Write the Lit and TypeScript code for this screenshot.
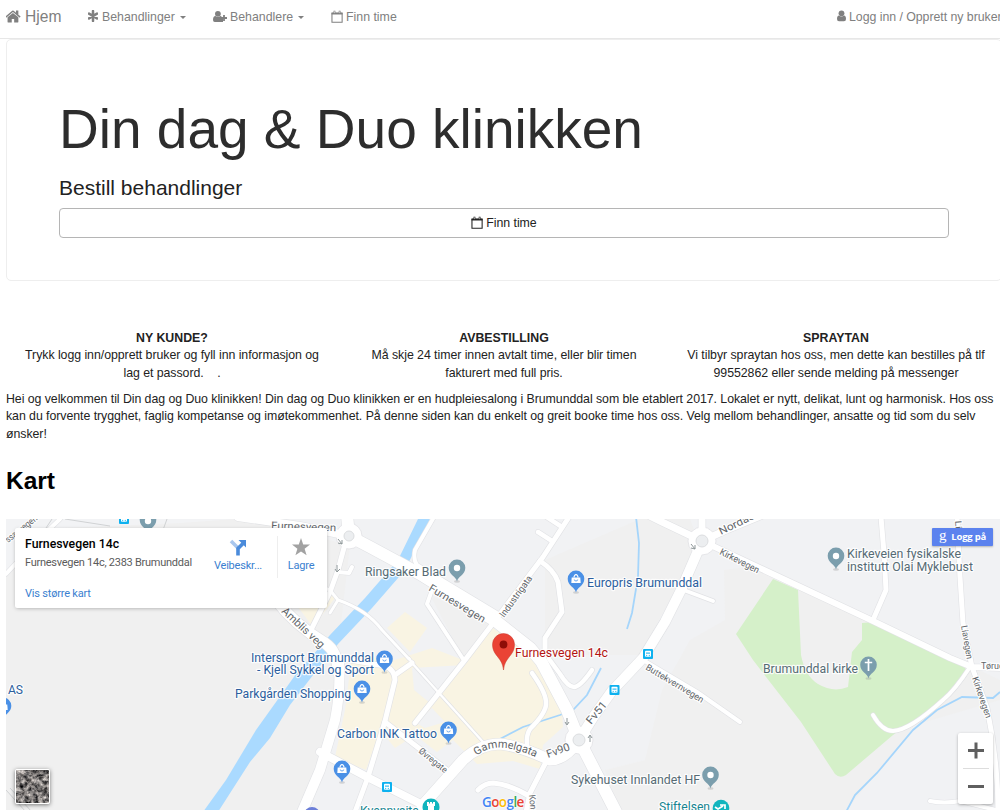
import { LitElement, html, svg, css } from "lit";
import { customElement } from "lit/decorators.js";

const calendar = svg`<path d="M1 3.2h10.6v9.3H1z" fill="none" stroke="currentColor" stroke-width="1.1"/><path d="M.6 2.4h11.4v2H.6z" fill="currentColor"/><path d="M3.6 .5v2.8M9 .5v2.8" stroke="currentColor" stroke-width="1.9"/><path d="M3.6 1v2M9 1v2" stroke="#fff" stroke-width=".6"/>`;
const home = svg`<path fill="currentColor" d="M1408 992v480q0 26-19 45t-45 19h-384v-384h-256v384h-384q-26 0-45-19t-19-45v-480q0-1 .5-3t.5-3l575-474 575 474q1 2 1 6zm223-69l-62 74q-8 9-21 11h-3q-13 0-21-7l-692-577-692 577q-12 8-24 7-13-2-21-11l-62-74q-8-10-7-23.5t11-21.5l719-599q32-26 76-26t76 26l244 204v-195q0-14 9-23t23-9h192q14 0 23 9t9 23v408l219 182q10 8 11 21.5t-7 23.5z"/>`;

type Line = [string, number];

// Streets: centre line and width
const streets: Line[] = [
  ["M347 515L349 536L370 547L420 574L497 622L530 648L541 661L567 710L579 740L616 812", 12],
  ["M579 740L594 716L612 691L643 658L665 622L681 590L697 553L702 541", 10],
  ["M579 740Q565 760 550 760Q520 746 500 744Q480 744 463 760L422 806", 11],
  ["M702 541L873 621L950 658L972 667L1002 668", 6],
  ["M702 541L660 521L650 516M702 541L702 517M702 541L724 531L770 512", 7],
  ["M957 517L960 577L963 623L972 667L987 708Q998 760 998 812", 5],
  ["M881 517L884 553L886 590L873 620", 5],
  ["M681 589L713 601", 4],
  ["M873 715Q882 731 893 731Q910 730 943 700Q955 690 970 667", 4],
  ["M643 660L697 692L740 722", 4],
  ["M569 517L543 557L497 618L465 660L415 723", 5],
  ["M540 561Q554 570 558 582L562 612L545 638L545 652", 5],
  ["M545 516L562 527M538 532L552 541", 4.5],
  ["M434 517L415 550Q413 560 417 565L500 615", 4],
  ["M432 590L427 604L463 659", 4],
  ["M409 658L412 663L483 742", 2.5],
  ["M345 544L338 570L330 592L310 632", 5],
  ["M337 572L349 573L352 567", 4],
  ["M322 587L330 590L338 600L330 613M338 600Q367 610 382 630L409 659", 3],
  ["M238 517L300 526L349 536", 8],
  ["M276 600Q295 625 325 643Q338 652 338 672", 11],
  ["M339 660Q341 690 335 720L320 770L302 812", 10],
  ["M320 752L367 777L425 806", 8],
  ["M355 812L368 777L385 721L395 680Q395 670 385 666L338 658M395 675L412 663", 5],
  ["M385 722L451 773", 5],
  ["M532 673Q547 694 546 704Q546 713 530 729Q526 735 527 745", 4.5],
  ["M549 659L560 674Q568 687 574 687Q580 687 592 670", 4.5],
  ["M547 760L530 793L526 812M478 790Q485 783 493 783Q509 784 529 796", 5],
  ["M930 801Q944 804 960 801L1000 811", 4],
  ["M6 574L35 543L60 519", 4],
];
const water = [
  "M636 517L639 543L638 577L632 613L627 629",
  "M601 668L587 695L573 710L560 715L523 727L498 740",
  "M1000 692L993 698L962 697L937 710L913 730L877 773L855 795L846 812",
];
// Labels: text, x, y, drawn length, size, colour, rotation
type Label = [string, number, number, number, number, string, number];
const G = "#566b74", B = "#2c5f9e", R = "#62666a", T = "#168591", D = "#b31412";
const labels: Label[] = [
  ["Ringsaker Blad", 365, 576, 81, 12, G, 0],
  ["Europris Brumunddal", 587, 587, 115, 12, B, 0],
  ["Kirkeveien fysikalske", 847, 558, 114, 12, G, 0],
  ["institutt Olai Myklebust", 847, 570.5, 126, 12, G, 0],
  ["Furnesvegen 14c", 515, 657, 93, 12.5, D, 0],
  ["Intersport Brumunddal", 251, 661.5, 123, 12, B, 0],
  ["- Kjell Sykkel og Sport", 257, 674, 117, 12, B, 0],
  ["Parkgården Shopping", 235, 697.5, 116, 12, B, 0],
  ["Carbon INK Tattoo", 337, 738, 100, 12, B, 0],
  ["AS", 8, 694, 15, 12, B, 0],
  ["Brumunddal kirke", 763, 673, 95, 12, G, 0],
  ["Sykehuset Innlandet HF", 571, 784, 129, 12, G, 0],
  ["Stiftelsen", 659, 811, 51, 12, T, 0],
  ["Kvennvsita", 360, 815, 59, 12, T, 0],
  ["Furnesvegen", 271, 529, 65, 10.5, R, 2],
  ["Furnesvegen", 428, 590, 64, 10.5, R, 31],
  ["Industrigata", 504, 618, 49, 9.5, R, -54],
  ["Kirkevegen", 719, 554, 43, 9.5, R, 27],
  ["Nordas", 721, 535, 38, 10.5, R, -26],
  ["Amblis veg", 281, 612, 54, 11, R, 43],
  ["Øvregate", 418, 752, 34, 9, R, 39],
  ["Fv51", 591, 725, 26, 11, R, -50],
  ["Fv90", 548, 758, 24, 11, R, -20],
  ["Buttekvernvegen", 645, 669, 66, 9, R, 31],
  ["Liavegen", 961, 626, 34, 9, R, 80],
  ["Kirkevegen", 972, 678, 43, 9, R, 71],
  ["Tørud", 981, 669, 23, 9, R, 0],
  ["ssasvegen", 8, 543, 38, 9, R, -38],
  ["Konge", 529, 795, 24, 9, R, 84],
  ["Li", 955, 521, 8, 9, R, 85],
];
const shops: [number, number][] = [[576, 580], [384.5, 660], [362, 690], [448.5, 731], [342, 770], [3, 707]];
const places: [number, number][] = [[457, 569], [836, 557], [710.5, 776]];
const stops: [number, number][] = [[648, 654], [614.5, 690], [387, 787], [124, 519]];

const pin = (x: number, y: number, fill: string, inner: unknown) => svg`
  <g transform="translate(${x} ${y})">
    <ellipse cx="0" cy="12.5" rx="3" ry="1.2" fill="#999" opacity=".35"/>
    <path d="M0 12.5C-.7 7.5-8.3 6-8.3-1.2a8.3 8.3 0 0 1 16.6 0C8.3 6 .7 7.5 0 12.5z" fill="${fill}"/>
    ${inner}
  </g>`;
const bag = svg`<path d="M-4.300-2.500h8.600l.4 5.500h-9.400z" fill="#fff"/><path d="M-2-2.500a2 2.800 0 0 1 4 0" fill="none" stroke="#fff" stroke-width="1.200"/><path d="M-1.700-.5a1.700 1.500 0 0 0 3.400 0" fill="none" stroke="#4a90e6" stroke-width=".8"/>`;

@customElement("clinic-map")
class ClinicMap extends LitElement {
  static styles = css`
    :host { display: block; position: relative; height: 291px; overflow: hidden; font-family: Roboto, sans-serif; }
    .canvas { display: block; width: 994px; height: 291px; }
    .label { paint-order: stroke; stroke: #fff; stroke-width: 2.4px; stroke-linejoin: round; stroke-opacity: .85; }
    .card { position: absolute; left: 9px; top: 9px; width: 312px; height: 80px; box-sizing: border-box; padding: 8px 10px; background: #fff; border-radius: 2px; box-shadow: 0 1px 4px -1px rgba(0,0,0,.35); display: flex; }
    .info { flex: none; width: 185px; white-space: nowrap; font-size: 11px; color: #5b5b5b; }
    .name { font-size: 12.3px; line-height: 17px; font-weight: 500; color: #000; }
    .addr { line-height: 18px; margin-top: 1px; letter-spacing: -.26px; }
    .info a { display: block; margin-top: 14px; line-height: 16px; color: #3a7fd0; font-size: 11px; letter-spacing: -.2px; }
    .act { text-align: center; color: #3a7fd0; font-size: 11px; line-height: 14px; letter-spacing: -.2px; }
    .act svg { display: block; margin: 1px auto 2px; }
    .directions { flex: none; width: 58px; margin-left: -1px; }
    .save { flex: none; width: 46px; margin-left: 10px; border-left: 1px solid #eee; height: 42px; }
    .login { position: absolute; left: 926px; top: 9px; width: 61px; height: 18px; box-sizing: border-box; background: #5b82ee; border-radius: 1px; box-shadow: 0 1px 2px rgba(0,0,0,.25); color: #fff; font: bold 9.5px/17px "Open Sans", sans-serif; letter-spacing: -.2px; display: flex; gap: 5px; padding-left: 7px; white-space: nowrap; }
    .login span { font: 15px/14px "Liberation Serif", serif; }
    .zoom { position: absolute; left: 952px; top: 214px; width: 35px; height: 71px; background: #fff; border-radius: 2px; box-shadow: 0 1px 3px rgba(0,0,0,.3); }
    .zoom svg { display: block; }
    .sat { position: absolute; left: 9px; top: 250px; width: 33px; height: 33px; border: 1.5px solid #fff; border-radius: 2px; box-shadow: 0 1px 4px rgba(0,0,0,.5); overflow: hidden; }
    .sat svg { display: block; }
    .google { position: absolute; left: 476px; top: 274px; font: 600 13.5px/18px "Open Sans", sans-serif; letter-spacing: -.6px; text-shadow: 0 0 2px #fff, 0 0 2px #fff; }
    .gb { color: #4285f4; } .gr { color: #ea4335; } .gy { color: #fbbc05; } .gg { color: #34a853; }
  `;
  render() {
    return html`
      <svg class="canvas" viewBox="6 519 994 291">
        <rect x="6" y="519" width="994" height="291" fill="#f1f2f4"/>
        <path fill="#f0f0f0" d="M6 519H240L350 545L338 650L338 700L300 812H6zM545 560L640 519H690L700 545L640 655L545 655zM724 570L760 565L1000 680V700L915 725L845 812H620L605 770L645 760L662 690L690 640L725 620zM430 595L497 627L463 658z"/>
        <path fill="#f2f3f5" d="M6 519H236L180 523L60 528L6 570z"/>
        <path fill="#f9f4e3" d="M298 607L327 592L335 598L313 627zM405 612L427 628L410 652L387 628zM352 655L395 660L432 648L463 660L493 628L530 655L562 712L563 727L543 745L540 769L513 761L477 764L453 740L437 752L415 735L395 748L380 730L366 770L335 757L345 710z"/>
        <path fill="#f1f2f4" d="M412 668L465 665L430 703L414 690zM416 723L432 708L445 722L425 728z"/>
        <path fill="#d5f0c9" d="M773 579L798 590L801 655Q805 676 818 684Q833 693 848 687L852 652L862 640V623L873 622L953 658L967 670L943 700L893 735L846 775Q840 779 835 774L801 722L753 660L736 634z"/>
        <path fill="#aadaff" d="M418 519L398 560L365 598L330 635L313 655L296 674L256 730L226 780L203 812H218L250 762L270 738L290 705L320 666L338 644L372 608L405 570L430 519z"/>
        ${water.map((d) => svg`<path d="${d}" fill="none" stroke="#a5d5fb" stroke-width="1.8"/>`)}
        <path d="M6 790L26 812M10 788L32 812M52 519L44 531M65 519L110 526M167 519L163 530" fill="none" stroke="#d0d2d4"/>
        ${streets.map(([d, w]) => svg`<path d="${d}" fill="none" stroke="#e1e2e5" stroke-width="${w + 1.2}" stroke-linecap="round" stroke-linejoin="round"/>`)}
        <g fill="#fff" stroke="#dfe0e3" stroke-width=".8"><circle cx="579" cy="740" r="14"/><circle cx="702" cy="541" r="14"/><circle cx="349" cy="536" r="13"/></g>
        ${streets.map(([d, w]) => svg`<path d="${d}" fill="none" stroke="#fff" stroke-width="${w}" stroke-linecap="round" stroke-linejoin="round"/>`)}
        <g fill="#eceef0" stroke="#dcdee0"><circle cx="579" cy="740" r="6"/><circle cx="702" cy="541" r="6"/><circle cx="349" cy="536" r="5"/></g>
        <g fill="none" stroke="#8e9799" stroke-width="1"><path d="M567 718v6m-2-2l2 3 2-3M590 742v-6m-2 2l2-3 2 3M338 539l4 5m-4-1l4 1v-4M337 565v6m-2-2l2 3 3-3M691 544l4 5m-4-1l4 1v-4"/></g>
        ${labels.map(([t, x, y, len, size, c, r]) => svg`<text class="label" transform="translate(${x} ${y}) rotate(${r})" textLength="${len}" lengthAdjust="spacingAndGlyphs" font-size="${size}" fill="${c}">${t}</text>`)}
        <defs><path id="gammel" d="M477 756Q495 739 535 757"/></defs>
        <text class="label" font-size="11" fill="${R}" textLength="62"><textPath href="#gammel">Gammelgata</textPath></text>
        ${shops.map(([x, y]) => pin(x, y, "#4a90e6", bag))}
        ${places.map(([x, y]) => pin(x, y, "#7b9ead", svg`<circle cy="-1" r="3.2" fill="#fff"/>`))}
        ${pin(148, 521, "#7b9ead", svg`<circle r="3.2" fill="#fff"/>`)}
        ${pin(868.5, 666, "#7b9ead", svg`<path d="M0-7V5M-3.7-3.5H3.7" stroke="#fff" stroke-width="1.7"/>`)}
        ${stops.map(([x, y]) => svg`<g transform="translate(${x} ${y})"><rect x="-5" y="-5" width="10" height="10" rx="1" fill="#0eb1ef"/><rect x="-3" y="-3.2" width="6" height="6" rx=".8" fill="#fff"/><path d="M-2-.9h4M-1.8 1.4h1M.8 1.4h1M-2.3 3.3h1M1.3 3.3h1" stroke="#0eb1ef" stroke-width="1"/></g>`)}
        <circle cx="431" cy="807" r="8.5" fill="#12b5be"/><path d="M427 802h2v1.5h1V802h2v1.5h1V802h2v4h-1v5h-6v-5h-1z" fill="#fff"/>
        <circle cx="721" cy="808" r="8.3" fill="#12b5be"/><path d="M715 807l3 2 5-3m-3-1h5v4" fill="none" stroke="#fff" stroke-width="1.7"/>
        <circle cx="312" cy="815" r="8" fill="#6c7fd8"/>
        <path d="M503.500 670C502.500 657 492.500 656 492.500 644.500a11 11 0 0 1 22 0C514.500 656 504.500 657 503.500 670z" fill="#ea4335" stroke="#c9372c" stroke-width=".5"/><circle cx="503.500" cy="644.500" r="3.900" fill="#8f0d07"/>
      </svg>
      <div class="card">
        <div class="info"><div class="name">Furnesvegen 14c</div><div class="addr">Furnesvegen 14c, 2383 Brumunddal</div><a>Vis større kart</a></div>
        <div class="act directions"><svg width="20" height="20" viewBox="0 0 20 20"><path d="M3 4L10 11" stroke="#a9c7ee" stroke-width="3.500"/><path d="M10 18.500v-7l5-5" fill="none" stroke="#4a8bdb" stroke-width="3.600"/><path d="M10.500 3H18v7.500z" fill="#4a8bdb"/></svg>Veibeskr...</div>
        <div class="act save"><svg width="20" height="20" viewBox="0 0 20 20"><path fill="#a2a2a2" d="M10 1l2.200 6.500 6.800.1-5.400 4.100 2 6.600L10 14.400l-5.600 3.900 2-6.600L1 7.600l6.800-.1z"/></svg>Lagre</div>
      </div>
      <div class="login"><span>g</span>Logg på</div>
      <div class="sat"><svg width="33" height="33"><filter id="grain" x="0" y="0" width="100%" height="100%" color-interpolation-filters="sRGB"><feTurbulence type="fractalNoise" baseFrequency=".22" numOctaves="4" seed="8"/><feColorMatrix values="1.300 .4 0 0 -.37  1.250 .4 0 0 -.36  1.200 .4 0 0 -.34  0 0 0 0 1"/></filter><rect width="33" height="33" filter="url(#grain)"/><path d="M0 25Q10 22 17 12T33 9M3 5L20 20L31 33" fill="none" stroke="#aaa4a0" opacity=".6"/></svg></div>
      <div class="google"><span class="gb">G</span><span class="gr">o</span><span class="gy">o</span><span class="gb">g</span><span class="gg">l</span><span class="gr">e</span></div>
      <div class="zoom"><svg width="35" height="71"><path d="M10 17.500h16M18 9.500v16M10 53.500h16" stroke="#5f5f5f" stroke-width="3"/><path d="M5 35.500h26" stroke="#ddd"/></svg></div>
    `;
  }
}

@customElement("app-root")
class AppRoot extends LitElement {
  static styles = css`
    :host { display: block; width: 1000px; height: 810px; overflow: hidden; background: #fff; font-family: "Liberation Sans", Arial, sans-serif; font-size: 12.35px; line-height: 17.6px; color: #222; }
    nav { display: flex; border-bottom: 1px solid #e7e7e7; color: #808080; box-sizing: border-box; height: 39px; padding: 9px 0 0 6px; white-space: nowrap; }
    .item { display: flex; flex: none; align-items: flex-start; }
    .item svg { flex: none; margin-top: 1px; }
    .home { width: 82px; font-size: 15.6px; gap: 4px; margin-top: -1px; }
    .treat { width: 125px; gap: 4px; }
    .staff { width: 118px; gap: 3px; }
    .find { width: 506px; gap: 3px; }
    .user { gap: 3px; letter-spacing: -.04px; }
    .caret { margin: 7px 0 0 5px; border: 3.5px solid transparent; border-top-color: currentColor; border-bottom: 0; }
    .treat .caret, .staff .caret { margin-left: 1.5px; }
    .hero { box-sizing: border-box; width: 996px; height: 242px; margin-left: 6px; border: 1px solid #eee; border-radius: 5px; padding: 57px 53px 0 52px; }
    h1 { margin: 0; font-weight: 400; font-size: 55px; line-height: 64px; color: #2d2d2d; white-space: nowrap; }
    .lead { font-size: 21px; line-height: 30px; margin-top: 12px; color: #222; }
    .btn { box-sizing: border-box; width: 890px; height: 30px; margin-top: 5px; padding-top: 1px; border: 1px solid #b5b5b5; border-radius: 4px; display: flex; justify-content: center; align-items: center; gap: 3px; color: #222; letter-spacing: -.05px; }
    .btn svg { margin-top: -2px; }
    .cols { display: grid; grid-template-columns: 332px 332px 332px; padding-left: 6px; margin-top: 48.500px; text-align: center; white-space: nowrap; letter-spacing: -.05px; }
    .cols b { display: block; letter-spacing: 0; }
    .welcome { margin: 8.500px 0 0 6px; white-space: nowrap; letter-spacing: -.053px; }
    h2 { margin: 22.500px 0 23px 6px; font-size: 24.500px; line-height: 30px; color: #000; }
    clinic-map { margin-left: 6px; width: 994px; }
  `;
  render() {
    return html`
      <nav>
        <div class="item home"><svg width="15" height="15" viewBox="90 128 1600 1536">${home}</svg>Hjem</div>
        <div class="item treat"><svg width="10" height="12" viewBox="0 0 10 12"><path d="M5 1v10M1 3.600l8 4.800M9 3.600L1 8.400" stroke="currentColor" stroke-width="2.500" stroke-linecap="round"/></svg>Behandlinger<i class="caret"></i></div>
        <div class="item staff"><svg width="14" height="13" viewBox="0 0 14 13"><circle cx="4.900" cy="3.800" r="2.900" fill="currentColor"/><path d="M0 10Q0 6 2.500 6Q4.900 8 7.300 6Q8.300 6 8.800 7V9H10V12H1.800Q0 12 0 10z" fill="currentColor"/><path d="M11 5v6M8 8h6" stroke="currentColor" stroke-width="1.800"/></svg>Behandlere<i class="caret"></i></div>
        <div class="item find"><svg width="12" height="13" viewBox="0 0 12.500 13">${calendar}</svg>Finn time</div>
        <div class="item user"><svg width="9" height="12" viewBox="0 0 9 12"><circle cx="4.500" cy="3.300" r="2.900" fill="currentColor"/><path d="M0 9Q0 5.400 2 5.400Q4.500 7.400 7 5.400Q9 5.400 9 9Q9 11.300 7 11.300H2Q0 11.300 0 9z" fill="currentColor"/></svg>Logg inn / Opprett ny bruker</div>
      </nav>
      <section class="hero">
        <h1>Din dag &amp; Duo klinikken</h1>
        <div class="lead">Bestill behandlinger</div>
        <div class="btn"><svg width="12" height="13" viewBox="0 0 12.500 13">${calendar}</svg>Finn time</div>
      </section>
      <section class="cols">
        <div><b>NY KUNDE?</b>Trykk logg inn/opprett bruker og fyll inn informasjon og<br>lag et passord. &nbsp; &nbsp;.</div>
        <div><b>AVBESTILLING</b>Må skje 24 timer innen avtalt time, eller blir timen<br>fakturert med full pris.</div>
        <div><b>SPRAYTAN</b>Vi tilbyr spraytan hos oss, men dette kan bestilles på tlf<br>99552862 eller sende melding på messenger</div>
      </section>
      <div class="welcome">Hei og velkommen til Din dag og Duo klinikken! Din dag og Duo klinikken er en hudpleiesalong i Brumunddal som ble etablert 2017. Lokalet er nytt, delikat, lunt og harmonisk. Hos oss<br>kan du forvente trygghet, faglig kompetanse og imøtekommenhet. På denne siden kan du enkelt og greit booke time hos oss. Velg mellom behandlinger, ansatte og tid som du selv<br>ønsker!</div>
      <h2>Kart</h2>
      <clinic-map></clinic-map>
    `;
  }
}
